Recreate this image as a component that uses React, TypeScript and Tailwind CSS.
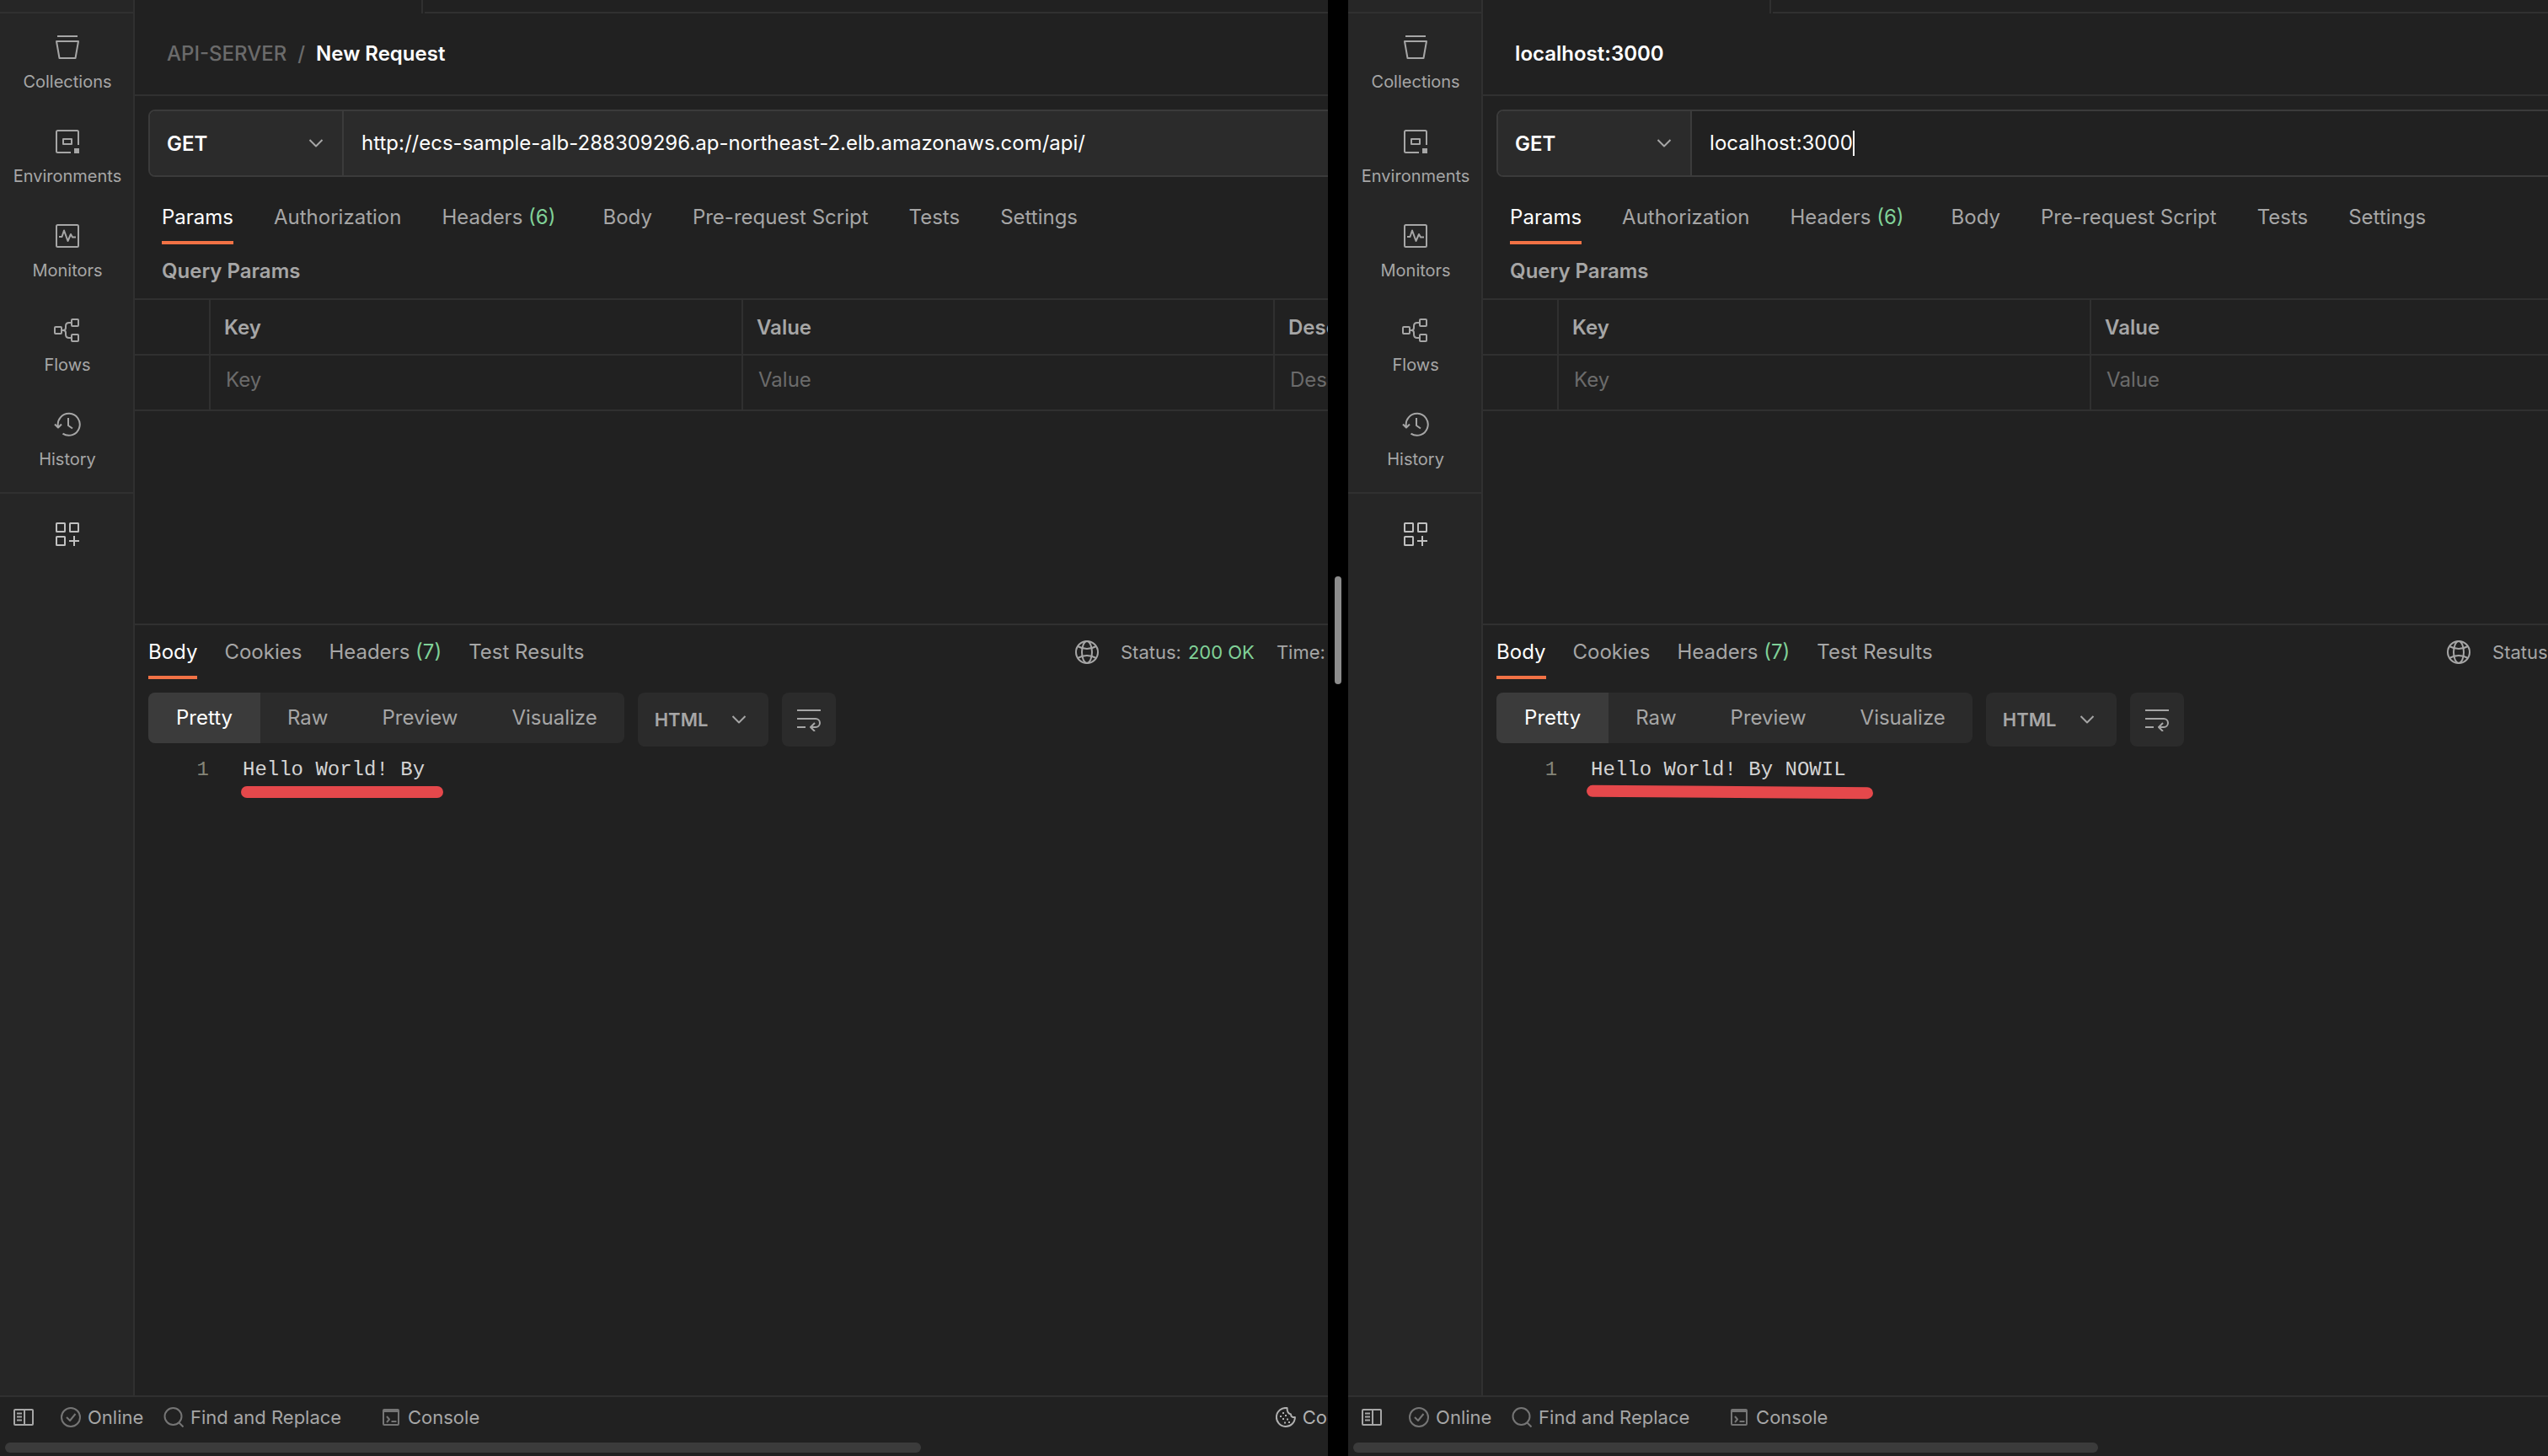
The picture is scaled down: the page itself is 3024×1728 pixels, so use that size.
import type { ReactNode } from "react";

type IconProps = { children: ReactNode; w?: number; h?: number; className?: string };

function Icon({ children, w = 32, h = 32, className = "" }: IconProps) {
  return (
    <svg
      width={w}
      height={h}
      viewBox={`0 0 ${w} ${h}`}
      fill="none"
      stroke="currentColor"
      strokeWidth={2}
      strokeLinejoin="round"
      className={`shrink-0 ${className}`}
      aria-hidden="true"
    >
      {children}
    </svg>
  );
}

const navItems: { label: string; icon: ReactNode }[] = [
  {
    label: "Collections",
    icon: (
      <Icon>
        <path d="M4 3h24M3 9h26l-3.5 20h-19z" />
      </Icon>
    ),
  },
  {
    label: "Environments",
    icon: (
      <Icon>
        <path d="M29 20V4.5a1.5 1.5 0 0 0-1.5-1.5h-23A1.5 1.5 0 0 0 3 4.5v23A1.5 1.5 0 0 0 4.5 29H20" />
        <rect x="11" y="13" width="10" height="6" />
        <rect x="24" y="24" width="6" height="6" fill="currentColor" stroke="none" />
      </Icon>
    ),
  },
  {
    label: "Monitors",
    icon: (
      <Icon>
        <rect x="3" y="3" width="26" height="26" rx="1.5" />
        <path d="M6 17h3.5L12 9.5l4.5 12.5 3.5-8 2 3.5h4" />
      </Icon>
    ),
  },
  {
    label: "Flows",
    icon: (
      <Icon>
        <rect x="1" y="12" width="8" height="8" rx="1" />
        <rect x="21" y="3" width="8" height="8" rx="1" />
        <rect x="21" y="21" width="8" height="8" rx="1" />
        <path d="M10 16h1c2 0 3-1 3-3v-2c0-2.5 1.5-4 4-4h2M11 16c2 0 3 1 3 3v2c0 2.5 1.5 4 4 4h2" />
      </Icon>
    ),
  },
  {
    label: "History",
    icon: (
      <Icon>
        <path d="M10.5 26.6A13 13 0 1 0 5 18.5M1 15.5l4 4 4-4M17 8v9l5 3.5" />
      </Icon>
    ),
  },
];

function Chevron({ className = "" }: { className?: string }) {
  return (
    <Icon w={18} h={12} className={className}>
      <path d="M1.5 2l7.5 7.5L16.5 2" />
    </Icon>
  );
}

function Sidebar() {
  return (
    <nav className="w-40 shrink-0 border-r-2 border-[#303030] bg-[#262626] text-[#a6a6a6]">
      <div className="h-4 border-b-2 border-[#303030]" />
      <div className="border-b-2 border-[#303030] pt-2">
        {navItems.map((item) => (
          <button
            key={item.label}
            type="button"
            className="flex h-28 w-full flex-col items-center gap-[11px] pt-4 pl-0.5 text-[20px] leading-7"
          >
            {item.icon}
            {item.label}
          </button>
        ))}
      </div>
      <button
        type="button"
        aria-label="Configure sidebar"
        className="flex w-full justify-center pt-8 pl-0.5 text-[#c0c0c0]"
      >
        <Icon>
          <rect x="3" y="3" width="10" height="10" rx="0.5" />
          <rect x="19" y="3" width="10" height="10" rx="0.5" />
          <rect x="3" y="19" width="10" height="10" rx="0.5" />
          <path d="M24 18v12M18 24h12" />
        </Icon>
      </button>
    </nav>
  );
}

type Tab = { label: string; count?: number };

const requestTabs: Tab[] = [
  { label: "Params" },
  { label: "Authorization" },
  { label: "Headers", count: 6 },
  { label: "Body" },
  { label: "Pre-request Script" },
  { label: "Tests" },
  { label: "Settings" },
];

const responseTabs: Tab[] = [
  { label: "Body" },
  { label: "Cookies" },
  { label: "Headers", count: 7 },
  { label: "Test Results" },
];

function Tabs({ tabs, className, countClass = "" }: { tabs: Tab[]; className: string; countClass?: string }) {
  return (
    <div role="tablist" className={`flex ${className}`}>
      {tabs.map((tab, i) => (
        <button
          key={tab.label}
          type="button"
          role="tab"
          aria-selected={i === 0}
          className={
            i === 0
              ? "border-b-4 border-[#f27245] pb-3 leading-8 text-white"
              : "border-b-4 border-transparent pb-3 leading-8"
          }
        >
          {tab.label}
          {tab.count !== undefined && (
            <span className={`text-[#80d198] ${countClass}`}> ({tab.count})</span>
          )}
        </button>
      ))}
    </div>
  );
}

const columns = ["Key", "Value", "Description"];

function ParamsTable() {
  return (
    <table className="w-full table-fixed border-collapse text-left">
      <colgroup>
        <col className="w-[89px]" />
        <col className="w-[632px]" />
        <col className="w-[631px]" />
        <col />
      </colgroup>
      <thead>
        <tr className="h-[66px] border-y-2 border-[#303030]">
          <th aria-label="Enabled" />
          {columns.map((c) => (
            <th key={c} className="border-l-2 border-[#303030] px-4 pt-0.5 font-semibold">
              {c}
            </th>
          ))}
        </tr>
      </thead>
      <tbody>
        <tr className="h-[66px] border-b-2 border-[#303030]">
          <td />
          {columns.map((c) => (
            <td key={c} className="border-l-2 border-[#303030] px-[18px] pb-1.5">
              <input
                aria-label={c}
                placeholder={c}
                className="w-full bg-transparent outline-none placeholder:text-[#6b6b6b]"
              />
            </td>
          ))}
        </tr>
      </tbody>
    </table>
  );
}

type PaneProps = {
  folder?: string;
  title: string;
  url: string;
  focused?: boolean;
  body: string;
  stroke: ReactNode;
  metaWidth: string;
  paneClass: string;
  thumbClass: string;
};

function RequestPane(p: PaneProps) {
  return (
    <section className={`flex min-w-0 flex-col overflow-hidden bg-[#212121] ${p.paneClass}`}>
      <div className="flex min-w-[2268px] grow">
        <Sidebar />
        <main className="flex min-w-0 grow flex-col">
          <div className="flex h-4">
            <div className="w-[342px] border-r-2 border-[#303030]" />
            <div className="ml-0.5 grow border-b-2 border-[#303030]" />
          </div>
          <header className="flex h-[98px] items-center gap-[13px] border-b-2 border-[#303030] pl-[38px] font-semibold">
            {p.folder && (
              <>
                <a href="#" className="font-medium text-[#6b6b6b]">
                  {p.folder}
                </a>
                <span className="font-medium text-[#6b6b6b]">/</span>
              </>
            )}
            <h1 className="text-white">{p.title}</h1>
          </header>

          <div className="mx-4 mt-4 flex h-20 rounded-lg border-2 border-[#3b3b3b] text-white">
            <div className="relative w-[230px] shrink-0 rounded-l-md border-r-2 border-[#3b3b3b] bg-[#2b2b2b]">
              <select
                aria-label="Method"
                className="h-full w-full appearance-none bg-transparent pt-0.5 pl-5 font-semibold outline-none"
              >
                <option>GET</option>
                <option>POST</option>
              </select>
              <Chevron className="pointer-events-none absolute top-8 right-[22px] text-[#a6a6a6]" />
            </div>
            <label
              className={
                p.focused
                  ? "flex grow items-center rounded-r-md pl-[21px]"
                  : "flex grow items-center rounded-r-md bg-[#2b2b2b] pl-[21px]"
              }
            >
              <input
                aria-label="Request URL"
                defaultValue={p.url}
                className="field-sizing-content bg-transparent outline-none"
              />
              {p.focused && <span className="h-[30px] w-0.5 bg-white" />}
            </label>
          </div>

          <Tabs tabs={requestTabs} className="gap-12 pt-8 pl-8" countClass="pr-2" />
          <h2 className="py-4 pl-8 leading-8 font-semibold">Query Params</h2>
          <ParamsTable />

          <div className="mt-[252px] border-t-2 border-[#303030] px-4 pt-4">
            <div className="flex">
              <Tabs tabs={responseTabs} className="gap-8" />
              <div className={`-mr-4 ml-auto flex h-8 items-center text-[22px] ${p.metaWidth}`}>
                <Icon w={28} h={28}>
                  <circle cx="14" cy="14" r="13" />
                  <ellipse cx="14" cy="14" rx="6" ry="13" />
                  <path d="M3 7q11 6 22 0M3 21q11-6 22 0" />
                </Icon>
                <span className="ml-[26px]">Status:</span>
                <span className="ml-2 text-[#80d198]">200 OK</span>
                <span className="ml-[26px]">Time:</span>
              </div>
            </div>
            <div className="mt-4 flex items-start gap-4">
              <div className="flex h-[60px] overflow-hidden rounded-lg bg-[#2b2b2b]">
                <button type="button" className="bg-[#3b3b3b] px-[33px] text-white">
                  Pretty
                </button>
                <button type="button" className="px-8">
                  Raw
                </button>
                <button type="button" className="px-8">
                  Preview
                </button>
                <button type="button" className="px-8">
                  Visualize
                </button>
              </div>
              <div className="relative h-16 w-[155px] rounded-lg bg-[#2b2b2b]">
                <select
                  aria-label="Response format"
                  className="h-full w-full appearance-none bg-transparent pl-5 text-[22px] font-semibold outline-none"
                >
                  <option>HTML</option>
                  <option>JSON</option>
                </select>
                <Chevron className="pointer-events-none absolute top-[26px] right-[26px]" />
              </div>
              <button
                type="button"
                aria-label="Wrap lines"
                className="flex size-16 items-center justify-center rounded-lg bg-[#2b2b2b]"
              >
                <Icon w={28} h={28}>
                  <path d="M0 3h28M0 13h22a5 5 0 0 1 0 10h-5M0 23h10M21 18l-5 5 5 5" />
                </Icon>
              </button>
            </div>
            <div className="relative mt-2.5 flex font-['Liberation_Mono',monospace] leading-9">
              <span className="w-[72px] text-right text-[#858578]">1</span>
              <code className="ml-10 font-['Liberation_Mono',monospace] text-[#d4d4d4]">{p.body}</code>
              {p.stroke}
            </div>
          </div>
        </main>
      </div>

      <footer className="flex h-[50px] min-w-[2268px] items-center border-t-2 border-[#303030] pl-4 text-[22px]">
        <button type="button" aria-label="Toggle sidebar">
          <Icon w={24} h={20}>
            <rect x="1" y="1" width="22" height="18" rx="1" />
            <path d="M13 1v18M4 5.5h6M4 9.5h6M4 13.5h6" />
          </Icon>
        </button>
        <button type="button" className="ml-8 flex w-[122px] items-center gap-2">
          <Icon w={24} h={24} className="text-[#757575]">
            <circle cx="12" cy="12" r="11" />
            <path d="M7 12l4 4 6.5-8" />
          </Icon>
          Online
        </button>
        <button type="button" className="flex w-[260px] items-center gap-2">
          <Icon w={24} h={24} className="text-[#757575]">
            <circle cx="11.5" cy="11" r="10" />
            <path d="M18.5 18.5l5 5" />
          </Icon>
          Find and Replace
        </button>
        <button type="button" className="flex items-center gap-2.5">
          <Icon w={20} h={20} className="text-[#757575]">
            <rect x="1" y="1" width="18" height="18" rx="1" />
            <path d="M1 3h18M5 9l3 3.5L5 16M10.5 15h6" />
          </Icon>
          Console
        </button>
        <button type="button" className="mr-[638px] ml-auto flex items-center gap-2 text-[#b0b0b0]">
          <Icon w={24} h={24}>
            <path d="M13.5 1.1A11 11 0 1 0 22.9 12c-3 .5-4.9-1-4.900-3.500-3-.5-4.500-3-4.500-7.400z" />
            <path d="M8 7h2M5 11h2M11 10h2M8 14h2M13 14.500h2M10 18.500h2M15 18h2" />
          </Icon>
          Cookies
        </button>
      </footer>
      <div className="h-[22px] px-1.5 pt-1.5">
        <div className={`h-3 rounded-full bg-[#3b3b3b] ${p.thumbClass}`} />
      </div>
    </section>
  );
}

export default function App() {
  return (
    <div className="flex min-h-screen bg-black font-[Inter,sans-serif] text-[24px] leading-8 text-[#a6a6a6]">
      <RequestPane
        folder="API-SERVER"
        title="New Request"
        url="http://ecs-sample-alb-288309296.ap-northeast-2.elb.amazonaws.com/api/"
        body="Hello World! By"
        stroke={<span className="absolute top-[37px] left-[110px] h-3.5 w-60 rounded-full bg-[#e5484b]" />}
        metaWidth="w-[992px]"
        paneClass="w-[52.12%] shrink-0"
        thumbClass="w-[69.5%]"
      />
      <div className="flex w-6 shrink-0 items-start justify-center pt-[684px]">
        <div className="h-32 w-2 rounded-full bg-[#8c8c8c]" />
      </div>
      <RequestPane
        title="localhost:3000"
        url="localhost:3000"
        focused
        body="Hello World! By NOWIL"
        stroke={
          <span className="absolute top-[37px] left-[107px] h-3.5 w-[340px] rotate-[0.4deg] rounded-full bg-[#e5484b]" />
        }
        metaWidth="w-[964px]"
        paneClass="grow basis-0"
        thumbClass="w-[62.6%]"
      />
    </div>
  );
}
